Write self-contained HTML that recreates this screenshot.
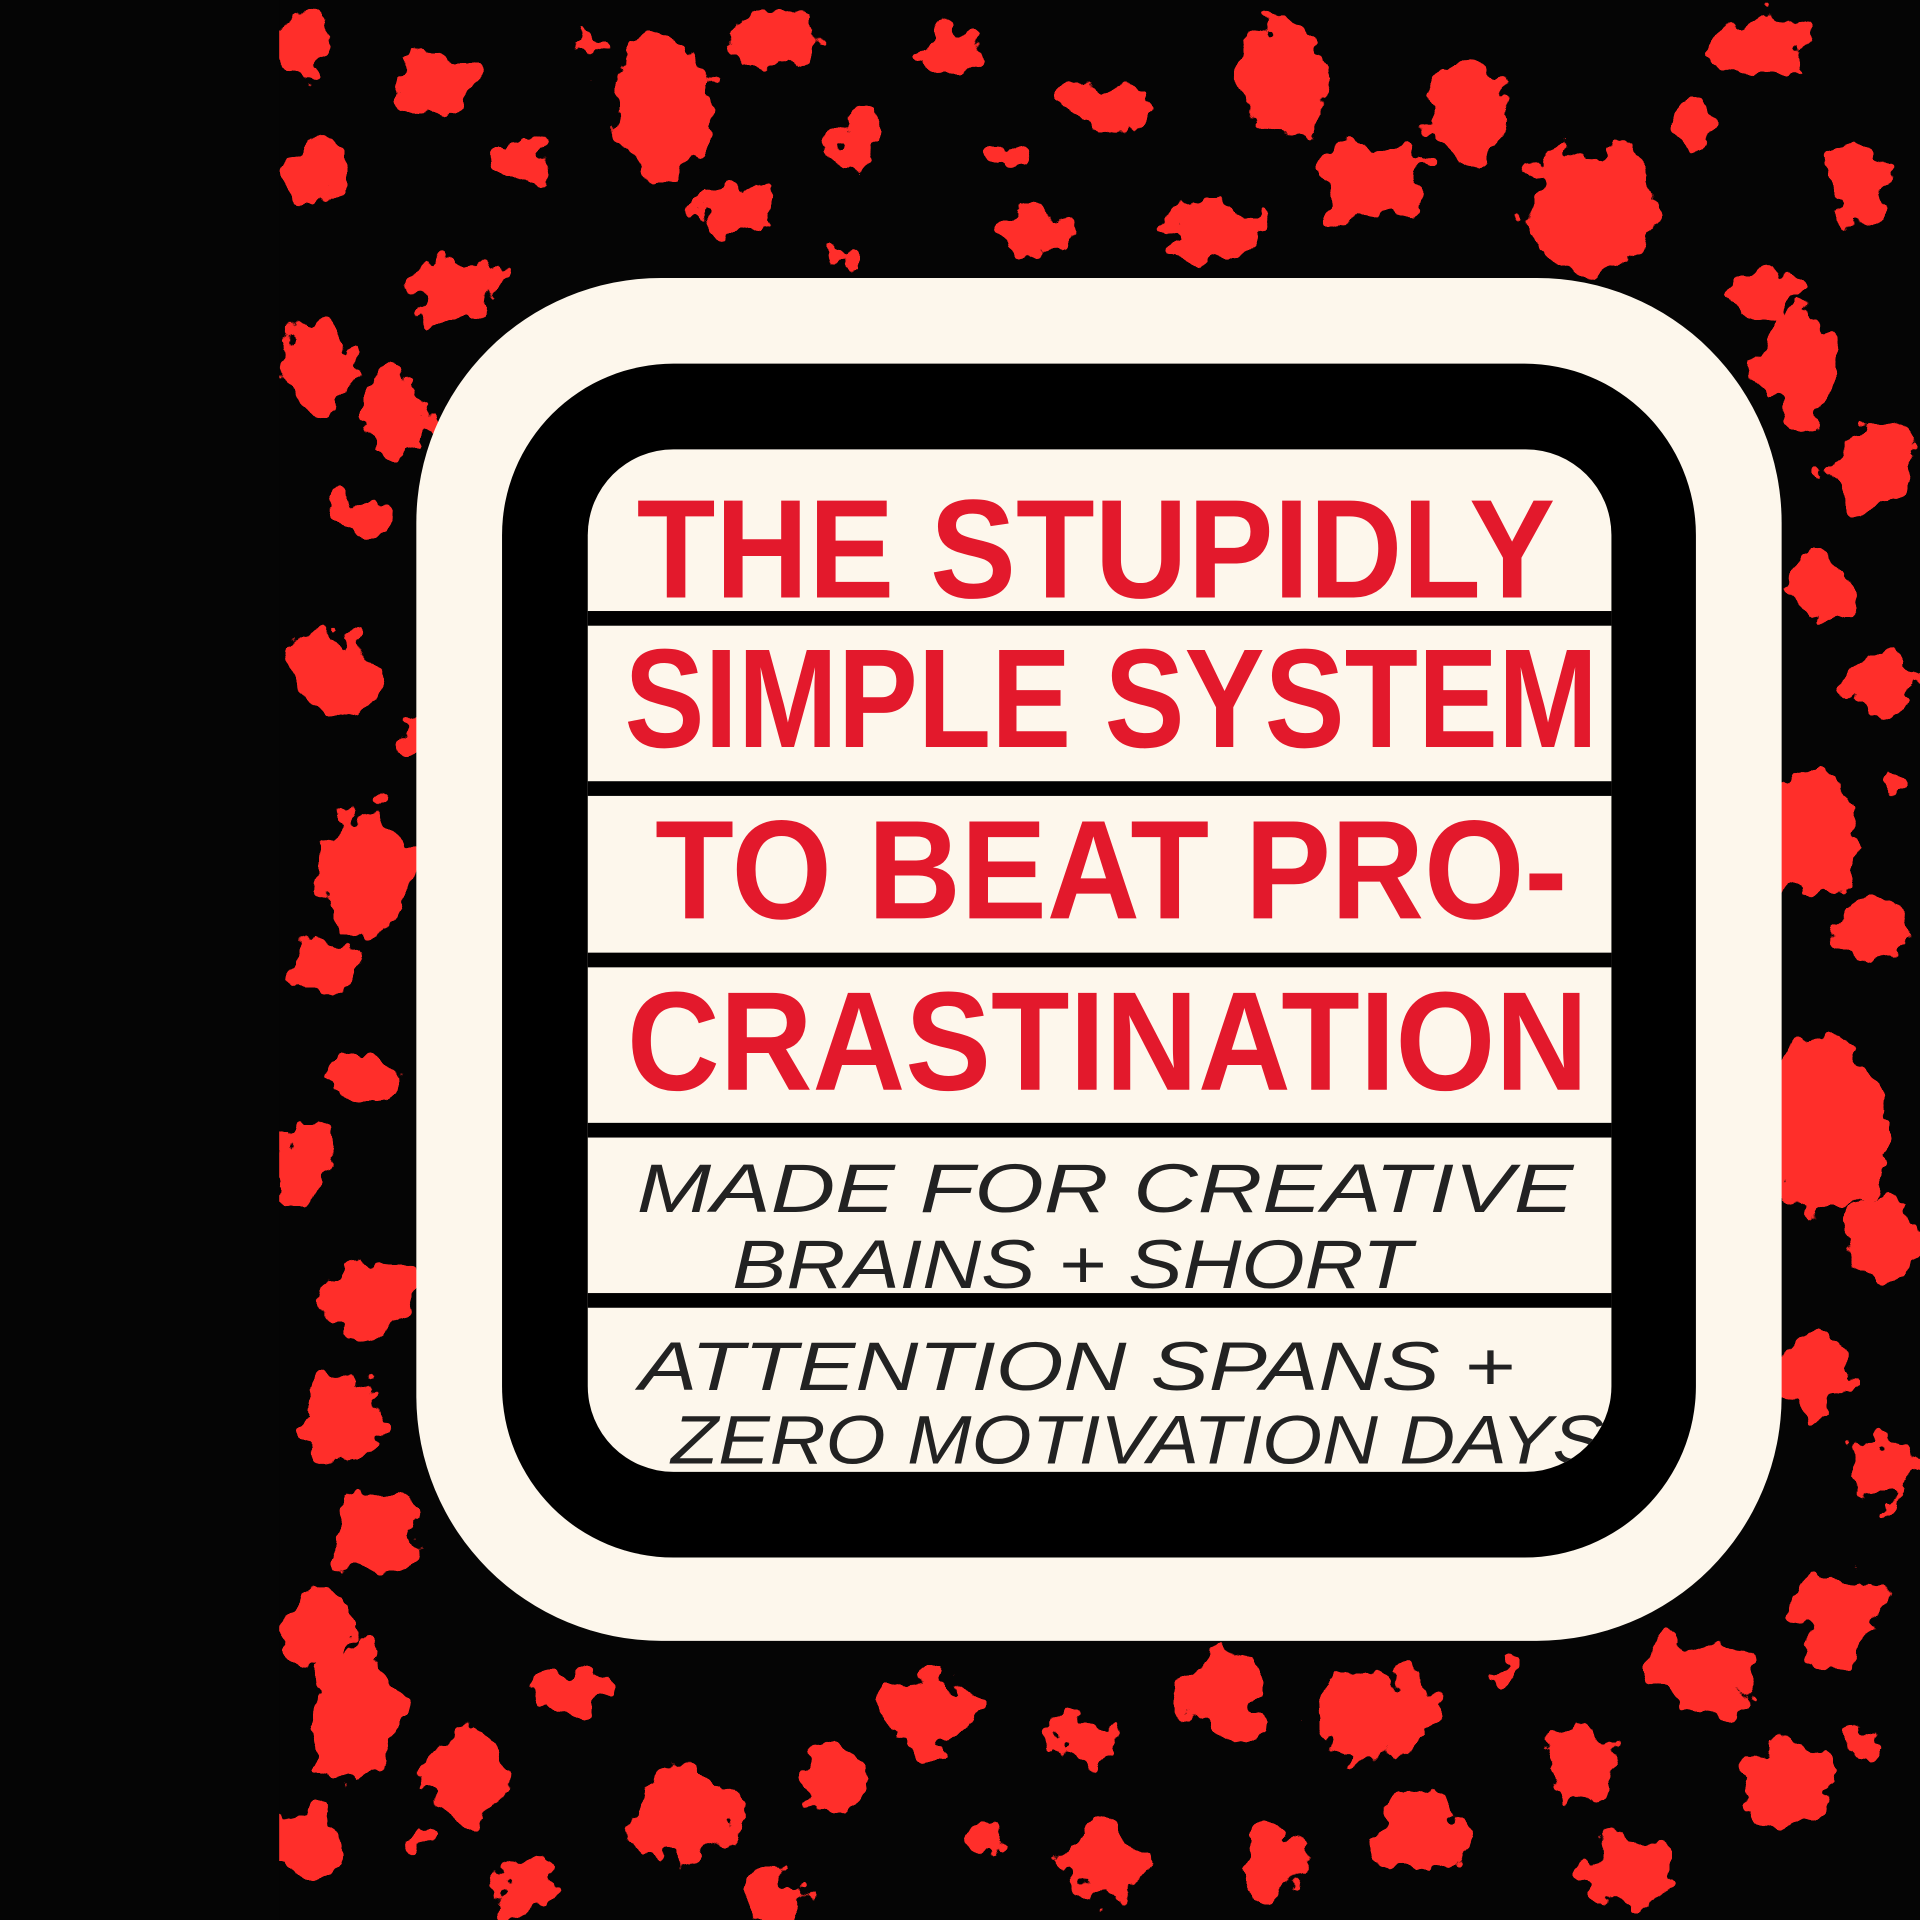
<!DOCTYPE html>
<html><head><meta charset="utf-8"><style>
html,body{margin:0;padding:0;background:#000;}
svg{display:block}
</style></head><body>
<svg width="1920" height="1920" viewBox="0 0 1568 1568" xmlns="http://www.w3.org/2000/svg">
<defs>
<filter id="rough" x="-10%" y="-10%" width="120%" height="120%">
<feTurbulence type="fractalNoise" baseFrequency="0.035" numOctaves="3" seed="4" result="n"/>
<feDisplacementMap in="SourceGraphic" in2="n" scale="45" xChannelSelector="R" yChannelSelector="G"/>
</filter>
<clipPath id="inner"><rect x="480" y="367" width="836" height="835" rx="70"/></clipPath>
</defs>
<rect width="1568" height="1568" fill="#050505"/>
<g fill="#ff2e2b" filter="url(#rough)">
<ellipse cx="250" cy="30" rx="25" ry="30"/><ellipse cx="360" cy="70" rx="30" ry="25"/><ellipse cx="540" cy="90" rx="40" ry="60"/><ellipse cx="630" cy="30" rx="35" ry="25"/><ellipse cx="780" cy="40" rx="25" ry="20"/><ellipse cx="900" cy="85" rx="40" ry="22"/><ellipse cx="1050" cy="60" rx="35" ry="50"/><ellipse cx="1120" cy="150" rx="45" ry="30"/><ellipse cx="1200" cy="90" rx="30" ry="45"/><ellipse cx="1300" cy="170" rx="55" ry="50"/><ellipse cx="1440" cy="40" rx="40" ry="25"/><ellipse cx="1520" cy="150" rx="25" ry="35"/><ellipse cx="255" cy="140" rx="25" ry="28"/><ellipse cx="370" cy="240" rx="35" ry="28"/><ellipse cx="600" cy="170" rx="30" ry="20"/><ellipse cx="845" cy="190" rx="28" ry="18"/><ellipse cx="990" cy="185" rx="40" ry="25"/><ellipse cx="430" cy="130" rx="18" ry="18"/><ellipse cx="700" cy="110" rx="18" ry="26"/><ellipse cx="1440" cy="240" rx="22" ry="28"/>
<ellipse cx="260" cy="300" rx="28" ry="36"/><ellipse cx="300" cy="420" rx="22" ry="22"/><ellipse cx="270" cy="550" rx="36" ry="36"/><ellipse cx="300" cy="710" rx="36" ry="55"/><ellipse cx="265" cy="790" rx="28" ry="28"/><ellipse cx="300" cy="880" rx="28" ry="20"/><ellipse cx="248" cy="950" rx="22" ry="36"/><ellipse cx="300" cy="1060" rx="36" ry="32"/><ellipse cx="280" cy="1160" rx="36" ry="36"/><ellipse cx="305" cy="1250" rx="36" ry="36"/><ellipse cx="260" cy="1330" rx="28" ry="28"/><ellipse cx="320" cy="340" rx="26" ry="36"/>
<ellipse cx="1470" cy="300" rx="36" ry="45"/><ellipse cx="1530" cy="380" rx="36" ry="36"/><ellipse cx="1490" cy="480" rx="28" ry="28"/><ellipse cx="1540" cy="560" rx="28" ry="28"/><ellipse cx="1480" cy="680" rx="36" ry="55"/><ellipse cx="1530" cy="760" rx="28" ry="28"/><ellipse cx="1490" cy="920" rx="50" ry="75"/><ellipse cx="1535" cy="1010" rx="28" ry="36"/><ellipse cx="1480" cy="1120" rx="28" ry="36"/><ellipse cx="1540" cy="1200" rx="28" ry="28"/><ellipse cx="1500" cy="1320" rx="36" ry="36"/>
<ellipse cx="290" cy="1400" rx="36" ry="55"/><ellipse cx="380" cy="1450" rx="36" ry="36"/><ellipse cx="470" cy="1380" rx="28" ry="18"/><ellipse cx="560" cy="1480" rx="45" ry="36"/><ellipse cx="680" cy="1450" rx="28" ry="28"/><ellipse cx="760" cy="1400" rx="36" ry="28"/><ellipse cx="880" cy="1420" rx="28" ry="18"/><ellipse cx="1000" cy="1380" rx="36" ry="36"/><ellipse cx="1120" cy="1400" rx="55" ry="36"/><ellipse cx="1160" cy="1500" rx="36" ry="36"/><ellipse cx="1290" cy="1440" rx="28" ry="28"/><ellipse cx="1390" cy="1370" rx="45" ry="28"/><ellipse cx="1460" cy="1460" rx="36" ry="36"/><ellipse cx="1330" cy="1530" rx="36" ry="28"/><ellipse cx="430" cy="1540" rx="28" ry="18"/><ellipse cx="630" cy="1550" rx="28" ry="18"/><ellipse cx="900" cy="1520" rx="36" ry="28"/><ellipse cx="1040" cy="1520" rx="28" ry="28"/><ellipse cx="250" cy="1500" rx="28" ry="28"/>
<circle cx="480" cy="40" r="10"/><circle cx="820" cy="130" r="12"/><circle cx="1380" cy="100" r="14"/><circle cx="690" cy="210" r="10"/><circle cx="1550" cy="640" r="12"/><circle cx="1520" cy="1420" r="12"/><circle cx="800" cy="1500" r="14"/><circle cx="1230" cy="1370" r="12"/><circle cx="350" cy="1500" r="10"/><circle cx="340" cy="600" r="10"/>
</g>
<rect x="0" y="0" width="228" height="1568" fill="#050505"/>
<rect x="340" y="227" width="1115" height="1113" rx="200" fill="#fdf7ec"/>
<rect x="410" y="297" width="975" height="975" rx="140" fill="#000"/>
<rect x="480" y="367" width="836" height="835" rx="70" fill="#fdf7ec"/>
<g fill="#000">
<rect x="480" y="499" width="836" height="12"/>
<rect x="480" y="638" width="836" height="12"/>
<rect x="480" y="778" width="836" height="12"/>
<rect x="480" y="917" width="836" height="12"/>
<rect x="480" y="1056" width="836" height="12"/>
</g>
<g font-family="Liberation Sans, sans-serif" font-weight="bold" fill="#e3192c" font-size="115">
<text x="520" y="488" textLength="750" lengthAdjust="spacingAndGlyphs">THE STUPIDLY</text>
<text x="510" y="610" textLength="795" lengthAdjust="spacingAndGlyphs">SIMPLE SYSTEM</text>
<text x="535" y="750" textLength="745" lengthAdjust="spacingAndGlyphs">TO BEAT PRO-</text>
<text x="512" y="890" textLength="785" lengthAdjust="spacingAndGlyphs">CRASTINATION</text>
</g>
<g font-family="Liberation Sans, sans-serif" fill="#222" font-size="56" font-style="italic" clip-path="url(#inner)">
<text x="520" y="990" textLength="765" lengthAdjust="spacingAndGlyphs">MADE FOR CREATIVE</text>
<text x="598" y="1052" textLength="555" lengthAdjust="spacingAndGlyphs">BRAINS + SHORT</text>
<text x="522" y="1135" textLength="715" lengthAdjust="spacingAndGlyphs">ATTENTION SPANS +</text>
<text x="548" y="1195" textLength="762" lengthAdjust="spacingAndGlyphs">ZERO MOTIVATION DAYS</text>
</g>
</svg>
</body></html>
